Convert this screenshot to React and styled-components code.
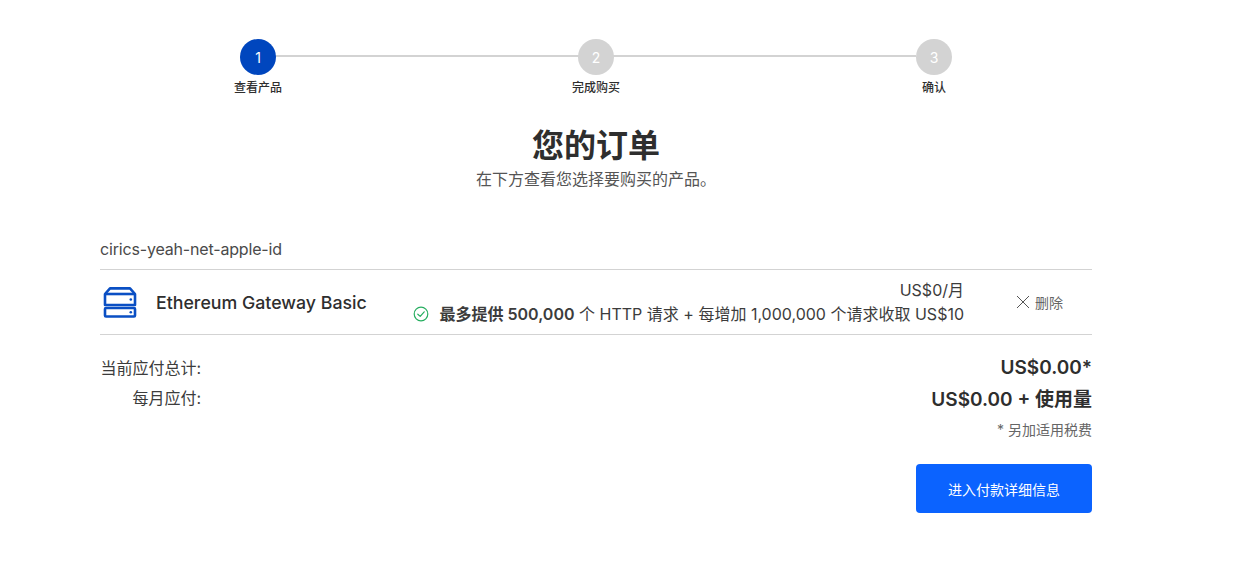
import React from "react"
import styled, { createGlobalStyle } from "styled-components"

const GlobalStyle = createGlobalStyle`
  html, body {
    margin: 0;
    padding: 0;
    background: #fff;
    font-family: Inter, "Noto Sans CJK SC", sans-serif;
    color: #2e2e2e;
  }
`

const steps = [
  { n: 1, label: "查看产品", active: true },
  { n: 2, label: "完成购买" },
  { n: 3, label: "确认" },
]

const ServerIcon = () => (
  <svg width="34" height="31" viewBox="0 0 34 31" fill="none" stroke="#0a4fc4" strokeWidth="2.6" strokeLinejoin="round">
    <path d="M2 7 L7 1.4 H27 L32 7 V18 H2 Z" />
    <path d="M2 7 H32" />
    <rect x="2" y="21" width="30" height="8.5" rx="1" />
    <circle cx="27.8" cy="12.5" r="1.3" fill="#0a4fc4" stroke="none" />
    <circle cx="27.8" cy="25.2" r="1.3" fill="#0a4fc4" stroke="none" />
  </svg>
)

const CheckIcon = () => (
  <svg width="16" height="16" viewBox="0 0 16 16" fill="none" stroke="#27ae60" strokeWidth="1.2">
    <circle cx="8" cy="8" r="6.8" />
    <path d="M4.8 8.2 L7.2 10.4 L11.2 5.8" strokeLinecap="round" strokeLinejoin="round" />
  </svg>
)

const CloseIcon = () => (
  <svg width="14" height="14" viewBox="0 0 14 14" stroke="#555" strokeWidth="1" fill="none">
    <path d="M1 1 L13 13 M13 1 L1 13" />
  </svg>
)

export default function App() {
  return (
    <>
      <GlobalStyle />
      <Page>
        <Stepper>
          {steps.map((s, i) => (
            <Step key={s.n} $last={i === steps.length - 1}>
              <Circle $active={s.active}>{s.n}</Circle>
              <StepLabel>{s.label}</StepLabel>
            </Step>
          ))}
        </Stepper>

        <Title>您的订单</Title>
        <Subtitle>在下方查看您选择要购买的产品。</Subtitle>

        <Account>cirics-yeah-net-apple-id</Account>
        <ProductRow>
          <IconBox><ServerIcon /></IconBox>
          <ProductName>Ethereum Gateway Basic</ProductName>
          <Pricing>
            <div>US$0/月</div>
            <Feature>
              <CheckIcon />
              <span><b>最多提供 500,000</b> 个 HTTP 请求 + 每增加 1,000,000 个请求收取 US$10</span>
            </Feature>
          </Pricing>
          <RemoveButton><CloseIcon />删除</RemoveButton>
        </ProductRow>

        <Totals>
          <TotalRow>
            <TotalLabel>当前应付总计:</TotalLabel>
            <TotalValue>US$0.00*</TotalValue>
          </TotalRow>
          <TotalRow>
            <TotalLabel>每月应付:</TotalLabel>
            <TotalValue>US$0.00 + 使用量</TotalValue>
          </TotalRow>
        </Totals>
        <TaxNote>* 另加适用税费</TaxNote>
        <Actions>
          <PrimaryButton>进入付款详细信息</PrimaryButton>
        </Actions>
      </Page>
    </>
  )
}

const Page = styled.div`
  width: 992px;
  margin-left: 100px;
  padding-top: 39px;
  height: 536px;
`

const Stepper = styled.div`
  display: flex;
  width: 676px;
  margin-left: 140px;
`

const Step = styled.div`
  position: relative;
  width: ${p => (p.$last ? "0" : "338px")};
  display: flex;
  flex-direction: column;
  align-items: flex-start;

  &::after {
    content: "";
    display: ${p => (p.$last ? "none" : "block")};
    position: absolute;
    top: 16px;
    left: 0;
    width: 338px;
    height: 2px;
    background: #d3d3d3;
  }
`

const Circle = styled.div`
  position: relative;
  z-index: 1;
  width: 36px;
  height: 36px;
  flex: none;
  border-radius: 50%;
  background: ${p => (p.$active ? "#0046be" : "#d3d3d3")};
  color: #fff;
  font-size: 14px;
  display: flex;
  align-items: center;
  justify-content: center;
`

const StepLabel = styled.div`
  width: 80px;
  margin: 5px 0 0 -22px;
  text-align: center;
  font-size: 12px;
  line-height: 15px;
  font-weight: 500;
  color: #2e2e2e;
`

const Title = styled.h1`
  margin: 31px 0 0;
  text-align: center;
  font-size: 32px;
  line-height: 40px;
  font-weight: 700;
  color: #2e2e2e;
`

const Subtitle = styled.p`
  margin: 2px 0 0;
  text-align: center;
  font-size: 16px;
  line-height: 22px;
  color: #555;
`

const Account = styled.div`
  margin-top: 47px;
  font-size: 16px;
  line-height: 24px;
  letter-spacing: -0.17px;
  color: #4a4a4a;
  padding-bottom: 8px;
`

const ProductRow = styled.div`
  display: flex;
  align-items: center;
  height: 64px;
  border-top: 1px solid #d3d3d3;
  border-bottom: 1px solid #d3d3d3;
`

const IconBox = styled.div`
  display: flex;
  width: 56px;
  padding-left: 3px;
  box-sizing: border-box;
`

const ProductName = styled.div`
  font-size: 17.75px;
  font-weight: 500;
  color: #2e2e2e;
`

const Pricing = styled.div`
  flex: 1;
  text-align: right;
  font-size: 16px;
  line-height: 24px;
  color: #3c3c3c;
`

const Feature = styled.div`
  display: flex;
  justify-content: flex-end;
  align-items: center;
  gap: 10px;

  b {
    font-weight: 600;
  }
`

const RemoveButton = styled.div`
  width: 128px;
  box-sizing: border-box;
  padding-left: 52px;
  display: flex;
  align-items: center;
  gap: 5px;
  font-size: 14px;
  color: #666;
`

const Totals = styled.div`
  display: flex;
  flex-direction: column;
  margin-top: 17px;
`

const TotalRow = styled.div`
  display: flex;
  justify-content: space-between;
  align-items: center;
  height: 30px;
`

const TotalLabel = styled.div`
  width: 101px;
  text-align: right;
  font-size: 16px;
  color: #3c3c3c;
`

const TotalValue = styled.div`
  font-size: 19px;
  font-weight: 600;
  color: #2e2e2e;
`

const TaxNote = styled.div`
  margin-top: 9px;
  text-align: right;
  font-size: 14px;
  line-height: 18px;
  color: #666;
`

const Actions = styled.div`
  display: flex;
  justify-content: flex-end;
  margin-top: 25px;
`

const PrimaryButton = styled.button`
  width: 176px;
  height: 49px;
  border: 0;
  border-radius: 4px;
  background: #0b63ff;
  color: #fff;
  font-family: inherit;
  font-size: 14px;
`
